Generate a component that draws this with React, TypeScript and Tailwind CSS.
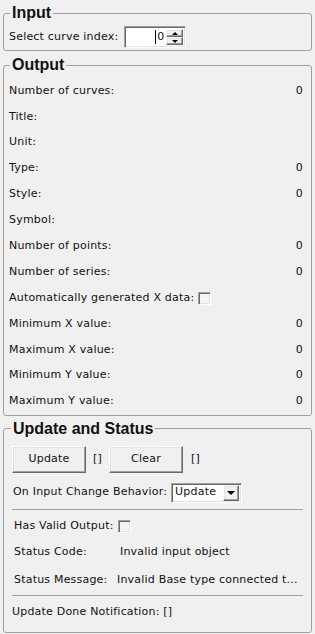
import React from "react";

const sunken =
  "border border-t-[#a0a0a0] border-l-[#a0a0a0] border-r-white border-b-white shadow-[inset_1px_1px_0_#696969,inset_-1px_-1px_0_#e3e3e3]";
const raised =
  "border border-t-white border-l-white border-r-[#696969] border-b-[#696969] shadow-[inset_-1px_-1px_0_#a0a0a0,inset_1px_1px_0_#e3e3e3] bg-[#f0f0f0]";

function Group({
  title,
  children,
  className = "",
  legendClass = "ml-[6px]",
}: {
  title: string;
  children: React.ReactNode;
  className?: string;
  legendClass?: string;
}) {
  return (
    <fieldset className={`rounded-[3px] border border-[#a0a0a0] ${className}`}>
      <legend
        className={`${legendClass} px-[2px] font-['Liberation_Sans',Arial,sans-serif] text-[16px] font-bold leading-[18px] tracking-normal`}
      >
        {title}
      </legend>
      {children}
    </fieldset>
  );
}

function CheckBox() {
  return <span className={`inline-block h-[13px] w-[13px] bg-[#f4f4f4] ${sunken}`} />;
}

function Row({ label, value, check }: { label: string; value?: string; check?: boolean }) {
  return (
    <div className="flex h-[25.9px] items-center justify-between pl-[5px] pr-[8px]">
      <span className="flex items-center gap-[4px]">
        {label}
        {check && <CheckBox />}
      </span>
      {value && <span>{value}</span>}
    </div>
  );
}

function SpinBox() {
  return (
    <div className={`ml-[6px] flex h-[22px] w-[62px] bg-white ${sunken}`}>
      <div className="flex flex-1 items-center justify-end pr-[2px]">
        <span className="mr-[1px] h-[14px] w-px bg-black" />
        <span>0</span>
      </div>
      <div className="my-[2px] mr-[2px] flex w-[17px] flex-col">
        <div className={`flex flex-1 items-center justify-center ${raised}`}>
          <span className="border-x-[3px] border-b-[3px] border-x-transparent border-b-black" />
        </div>
        <div className={`flex flex-1 items-center justify-center ${raised}`}>
          <span className="border-x-[3px] border-t-[3px] border-x-transparent border-t-black" />
        </div>
      </div>
    </div>
  );
}

function Button({ children }: { children: React.ReactNode }) {
  return (
    <div className={`flex h-[27px] w-[74px] items-center justify-center ${raised}`}>{children}</div>
  );
}

function Combo() {
  return (
    <div className={`ml-[4px] flex h-[20px] w-[71px] items-center bg-white ${sunken}`}>
      <span className="flex-1 pl-[3px]">Update</span>
      <div className={`mr-[2px] flex h-[16px] w-[16px] items-center justify-center ${raised}`}>
        <span className="border-x-[4px] border-t-[4px] border-x-transparent border-t-black" />
      </div>
    </div>
  );
}

export default function App() {
  const rows: { label: string; value?: string; check?: boolean }[] = [
    { label: "Number of curves:", value: "0" },
    { label: "Title:" },
    { label: "Unit:" },
    { label: "Type:", value: "0" },
    { label: "Style:", value: "0" },
    { label: "Symbol:" },
    { label: "Number of points:", value: "0" },
    { label: "Number of series:", value: "0" },
    { label: "Automatically generated X data:", check: true },
    { label: "Minimum X value:", value: "0" },
    { label: "Maximum X value:", value: "0" },
    { label: "Minimum Y value:", value: "0" },
    { label: "Maximum Y value:", value: "0" },
  ];

  return (
    <div className="h-[634px] w-[315px] overflow-hidden bg-[#f0f0f0] px-[3px] pt-[4px] font-['DejaVu_Sans',sans-serif] text-[11px] tracking-[0.2px] text-[#111]">
      <Group title="Input" className="pb-[2px]">
        <div className="mt-[4px] flex items-center pl-[5px]">
          <span>Select curve index:</span>
          <SpinBox />
        </div>
      </Group>

      <Group title="Output" className="mt-[5px]">
        <div className="pt-[4px]">
          {rows.map((r) => (
            <Row key={r.label} {...r} />
          ))}
        </div>
      </Group>

      <Group title="Update and Status" className="mt-[4px] h-[213px] px-[8px]" legendClass="-ml-[1px]">
        <div className="mt-[8px] flex items-center">
          <Button>Update</Button>
          <span className="mx-[7px]">[]</span>
          <Button>Clear</Button>
          <span className="ml-[8px]">[]</span>
        </div>
        <div className="mt-[10px] flex items-center pl-[1px]">
          <span>On Input Change Behavior:</span>
          <Combo />
        </div>
        <div className="mt-[6px] border-t border-[#a0a0a0]" />
        <div className="flex h-[29px] items-center gap-[4px] pl-[2px] pt-[4px]">
          <span>Has Valid Output:</span>
          <CheckBox />
        </div>
        <div className="flex h-[28px] items-center pl-[2px]">
          <span className="w-[106px]">Status Code:</span>
          <span>Invalid input object</span>
        </div>
        <div className="flex h-[27px] items-center pl-[2px]">
          <span className="w-[103px]">Status Message:</span>
          <span>Invalid Base type connected t...</span>
        </div>
        <div className="mt-[1px] border-t border-[#a0a0a0]" />
        <div className="flex h-[32px] items-center pt-[2px]">
          <span>Update Done Notification: []</span>
        </div>
      </Group>
    </div>
  );
}
